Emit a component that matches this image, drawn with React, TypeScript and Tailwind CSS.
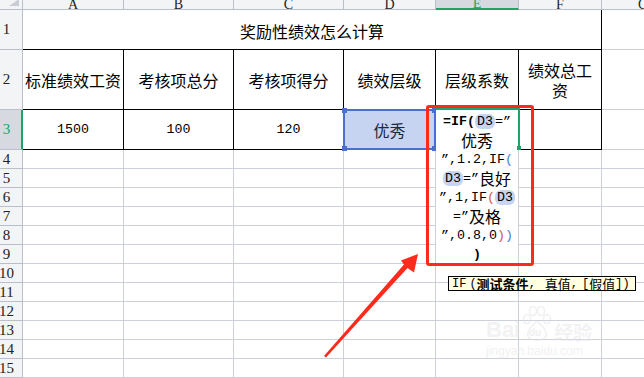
const letters = ["A", "B", "C", "D", "E", "F", "G"];
const headerRow = ["标准绩效工资", "考核项总分", "考核项得分", "绩效层级", "层级系数"];
const valueRow = ["1500", "100", "120", "", "", ""];
const emptyRows = [4, 5, 6, 7, 8, 9, 10, 11, 12, 13, 14, 15];

const cjk = "font-['Noto_Sans_CJK_SC',sans-serif]";
const mono = "font-['Liberation_Mono','Noto_Sans_CJK_SC',monospace] text-[13.3px]";
const tipMono = "font-['Liberation_Mono',monospace] text-[12px]";
const serif = "font-['Liberation_Serif',serif]";

function RowHead({ n, active }: { n: number; active?: boolean }) {
  return (
    <div
      className={`flex items-center overflow-visible border-b border-[#b9bfcb] ${serif} text-[15px] leading-none ${
        active
          ? "border-r-2 border-r-[#21a366] bg-[#d6d9df] text-[#21a366]"
          : "border-r border-r-[#b9bfcb] bg-[#f3f4f6] text-[#222]"
      }`}
    >
      <span className="flex w-[13px] justify-center whitespace-nowrap">{n}</span>
    </div>
  );
}

function Ref({ children }: { children: string }) {
  return (
    <span className={`inline-block rounded-[6px] bg-[#c7d4ef] px-[2px] leading-[15px] ${mono}`}>
      {children}
    </span>
  );
}

function Ascii({ children, className = "" }: { children: React.ReactNode; className?: string }) {
  return <span className={`${mono} ${className}`}>{children}</span>;
}

export default function App() {
  return (
    <div className="relative h-[378px] w-[644px] overflow-hidden bg-white text-black">
      <div className="grid grid-cols-[23px_101px_110px_110px_92px_83px_83px_83px] grid-rows-[10px_40px_60px_40px_repeat(12,19px)]">
        {/* column headers */}
        <div className="flex items-start justify-end border-r border-b border-[#b9bfcb] bg-[#f3f4f6] pr-[3px]">
          <svg width="10" height="7" viewBox="0 0 10 7">
            <polygon points="10,0 10,7 0,7" fill="#c9ccd2" transform="translate(0,-1)" />
          </svg>
        </div>
        {letters.map((l) => (
          <div
            key={l}
            className={`flex items-end justify-center overflow-hidden ${serif} text-[14px] leading-none ${
              l === "E"
                ? "border-b-2 border-r border-b-[#21a366] border-r-[#b9bfcb] bg-[#d6d9df] text-[#21a366]"
                : "border-r border-b border-[#b9bfcb] bg-[#f3f4f6] text-[#222]"
            }`}
          >
            <span className="translate-y-[3px]">{l}</span>
          </div>
        ))}

        {/* row 1 */}
        <RowHead n={1} />
        <div className={`col-span-6 flex items-center justify-center border-r border-b border-black pt-[3px] ${cjk} text-[16px]`}>
          奖励性绩效怎么计算
        </div>
        <div className="border-r border-b border-[#cbd0da]" />

        {/* row 2 */}
        <RowHead n={2} />
        {headerRow.map((t) => (
          <div key={t} className={`flex items-center justify-center border-r border-b border-black ${cjk} text-[16px]`}>
            {t}
          </div>
        ))}
        <div className={`flex flex-col items-center justify-center border-r border-b border-black ${cjk} text-[16px] leading-[20px]`}>
          <span>绩效总工</span>
          <span>资</span>
        </div>
        <div className="border-r border-b border-[#cbd0da]" />

        {/* row 3 */}
        <RowHead n={3} active />
        {valueRow.map((t, i) => (
          <div key={i} className={`flex items-center justify-center border-r border-b border-black ${mono}`}>
            {t}
          </div>
        ))}
        <div className="border-r border-b border-[#cbd0da]" />

        {/* empty rows */}
        {emptyRows.map((n) => (
          <div key={n} className="contents">
            <RowHead n={n} />
            {letters.map((l) => (
              <div key={l} className="border-r border-b border-[#cbd0da]" />
            ))}
          </div>
        ))}
      </div>

      {/* D3 selection */}
      <div className={`absolute left-[343px] top-[109px] flex h-[41px] w-[93px] items-center justify-center border-2 border-[#4a6fd0] bg-[#c6d3f1] ${cjk} text-[16px] text-[#1d2740]`}>
        优秀
        <span className="absolute -left-[3px] -top-[3px] h-[5px] w-[5px] bg-[#4a6fd0]" />
        <span className="absolute -bottom-[3px] -left-[3px] h-[5px] w-[5px] bg-[#4a6fd0]" />
        <span className="absolute -right-[3px] -top-[3px] h-[5px] w-[5px] bg-[#4a6fd0]" />
        <span className="absolute -bottom-[3px] -right-[3px] h-[5px] w-[5px] bg-[#4a6fd0]" />
      </div>

      {/* formula editor */}
      <div className={`absolute left-[436px] top-[110px] h-[152px] w-[82px] bg-white pt-[2px] ${cjk} text-[16px] leading-[19px]`}>
        <div className="flex h-[19px] items-center justify-center whitespace-nowrap">
          <Ascii className="font-bold">=IF(</Ascii>
          <Ref>D3</Ref>
          <Ascii>=”</Ascii>
        </div>
        <div className="flex h-[19px] items-center justify-center">优秀</div>
        <div className="flex h-[19px] items-center justify-center whitespace-nowrap">
          <Ascii>”,1.2,IF</Ascii>
          <Ascii className="text-[#4a7bd8]">(</Ascii>
        </div>
        <div className="flex h-[19px] items-center justify-center whitespace-nowrap">
          <Ref>D3</Ref>
          <Ascii>=”</Ascii>
          良好
        </div>
        <div className="flex h-[19px] items-center justify-center whitespace-nowrap">
          <Ascii>”,1,IF</Ascii>
          <Ascii className="text-[#d9534f]">(</Ascii>
          <Ref>D3</Ref>
        </div>
        <div className="flex h-[19px] items-center justify-center whitespace-nowrap">
          <Ascii>=”</Ascii>
          及格
        </div>
        <div className="flex h-[19px] items-center justify-center whitespace-nowrap">
          <Ascii>”,0.8,0</Ascii>
          <Ascii className="text-[#d9534f]">)</Ascii>
          <Ascii className="text-[#4a7bd8]">)</Ascii>
        </div>
        <div className="flex h-[19px] items-center justify-center">
          <Ascii className="font-bold">)</Ascii>
        </div>
      </div>

      {/* E3 active outline */}
      <div className="absolute left-[436px] top-[108px] h-[2px] w-[84px] bg-[#21a366]" />
      <div className="absolute left-[518px] top-[108px] h-[42px] w-[2px] bg-[#21a366]" />
      <div className="absolute left-[517px] top-[146px] h-[4px] w-[4px] bg-[#21a366]" />

      {/* red annotation box */}
      <div className="absolute left-[426px] top-[105px] h-[161px] w-[108px] rounded-[3px] border-[3px] border-[#fe2a1c]" />

      {/* tooltip */}
      <div className={`absolute left-[448px] top-[276px] flex h-[15px] w-[188px] items-center border border-black bg-[#ffffe1] pl-[3px] ${cjk} text-[13px] leading-none whitespace-nowrap`}>
        <span className={tipMono}>IF</span>
        <span className={`ml-[3px] ${tipMono}`}>(</span>
        <span className="font-bold">测试条件</span>
        <span className={tipMono}>,</span>
        <span className="ml-[9px]">真值</span>
        <span className={tipMono}>,</span>
        <span className={`ml-[4px] ${tipMono}`}>[</span>
        <span>假值</span>
        <span className={tipMono}>])</span>
      </div>

      {/* arrow */}
      <svg className="absolute left-0 top-0" width="644" height="378" viewBox="0 0 644 378">
        <polygon
          points="324,356 404,264.5 401,260.5 418,254 414,272.5 407.5,268 326,357.5"
          fill="#fe2a1c"
        />
      </svg>

      {/* watermark */}
      <div className="absolute left-[486px] top-[305px] flex flex-col items-start opacity-45">
        <div className="flex items-end">
          <span className="font-['Liberation_Sans',sans-serif] text-[22px] font-bold leading-none text-[#e4e4e4]">Bai</span>
          <svg width="34" height="36" viewBox="0 0 34 36">
            <g fill="none" stroke="#dedede" strokeWidth="1.5">
              <ellipse cx="7" cy="14" rx="3.5" ry="4.5" />
              <ellipse cx="13" cy="6" rx="3.5" ry="4.5" />
              <ellipse cx="21" cy="6" rx="3.5" ry="4.5" />
              <ellipse cx="27" cy="14" rx="3.5" ry="4.5" />
              <path d="M17 16 C 10 22, 5 28, 9 33 C 13 36, 21 36, 25 33 C 29 28, 24 22, 17 16 Z" />
            </g>
            <text x="9" y="31" fontSize="10" fontWeight="bold" fill="#e0e0e0" fontFamily="Liberation Sans">du</text>
          </svg>
          <span className={`${cjk} text-[19px] font-bold leading-none text-[#e4e4e4]`}>经验</span>
        </div>
        <span className="mt-[4px] font-['Liberation_Sans',sans-serif] text-[12px] leading-none text-[#e2e2e2]">
          jingyan.baidu.com
        </span>
      </div>
    </div>
  );
}
